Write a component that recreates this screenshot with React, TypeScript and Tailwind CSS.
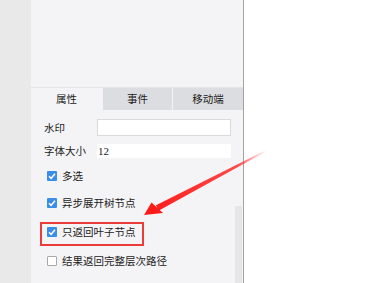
import React from "react";

const cjk = { fontFamily: '"Noto Sans CJK SC", "Noto Sans", sans-serif' };

function CheckBox({ checked }: { checked: boolean }) {
  if (!checked) {
    return <span className="block w-[10px] h-[10px] bg-white border border-[#a9a9a9] rounded-[1px]" />;
  }
  return (
    <span className="flex items-center justify-center w-[10px] h-[10px] bg-[#3a8ee6] rounded-[1px]">
      <svg width="10" height="10" viewBox="0 0 10 10">
        <path d="M2 5.2 L4.1 7.3 L8 2.7" fill="none" stroke="#fff" strokeWidth="1.5" />
      </svg>
    </span>
  );
}

function CheckRow({ label, checked, className }: { label: string; checked: boolean; className: string }) {
  return (
    <div className={`flex items-center h-[20px] pl-[16px] gap-[5px] ${className}`}>
      <CheckBox checked={checked} />
      <span className="text-[10.5px] text-[#222]">{label}</span>
    </div>
  );
}

function Arrow() {
  return (
    <svg className="absolute left-0 top-0 pointer-events-none" width="384" height="283" viewBox="0 0 384 283">
      <defs>
        <linearGradient id="fade" x1="266" y1="150" x2="150" y2="211" gradientUnits="userSpaceOnUse">
          <stop offset="0" stopColor="#ff2020" stopOpacity="0" />
          <stop offset="0.25" stopColor="#ff2020" stopOpacity="0.8" />
          <stop offset="1" stopColor="#ff1a1a" />
        </linearGradient>
      </defs>
      <polygon points="266,150 266.6,151.2 158.5,210.8 156,205.2" fill="url(#fade)" />
      <polygon points="144,215 151.5,202.5 163,213" fill="#ff1a1a" />
    </svg>
  );
}

export default function App() {
  return (
    <div className="relative w-[384px] h-[283px] flex bg-white overflow-hidden" style={cjk}>
      <div className="w-[31px] bg-[#e9e9e9]" />
      <div className="w-[213px] flex flex-col bg-[#f4f4f6] border-r border-[#a3a3a3]">
        <div className="h-[88px] border-b border-[#e4e4e6]" />
        <div className="flex h-[22px] gap-[1px] text-[10.5px] text-[#222]">
          <div className="w-[71px] flex items-center justify-center bg-[#f4f4f6]">属性</div>
          <div className="w-[69px] flex items-center justify-center bg-[#dcdde0]">事件</div>
          <div className="w-[70px] flex items-center justify-center bg-[#dcdde0]">移动端</div>
        </div>
        <div className="flex flex-1">
          <div className="flex-1 flex flex-col">
            <div className="flex items-center mt-[9px] h-[17px]">
              <span className="w-[66px] pl-[13px] text-[10.5px] text-[#222]">水印</span>
              <div className="w-[134px] h-[17px] bg-white border border-[#dadada]" />
            </div>
            <div className="flex items-center mt-[8px] h-[14px]">
              <span className="w-[66px] pl-[13px] text-[10.5px] text-[#222]">字体大小</span>
              <div className="w-[134px] h-[14px] bg-white flex items-center pl-[1px] text-[11px] text-[#222]" style={{ fontFamily: '"Liberation Serif", serif' }}>
                12
              </div>
            </div>
            <CheckRow label="多选" checked className="mt-[8px]" />
            <CheckRow label="异步展开树节点" checked className="mt-[7px]" />
            <CheckRow label="只返回叶子节点" checked className="mt-[9px]" />
            <CheckRow label="结果返回完整层次路径" checked={false} className="mt-[9px]" />
          </div>
          <div className="w-[7px] mr-[1px] flex flex-col pt-[96px]">
            <div className="flex-1 bg-[#e6e6e6]" />
          </div>
        </div>
      </div>
      <div className="absolute left-[40px] top-[222px] w-[104px] h-[24px] border-2 border-[#ec3b3b]" />
      <Arrow />
    </div>
  );
}
